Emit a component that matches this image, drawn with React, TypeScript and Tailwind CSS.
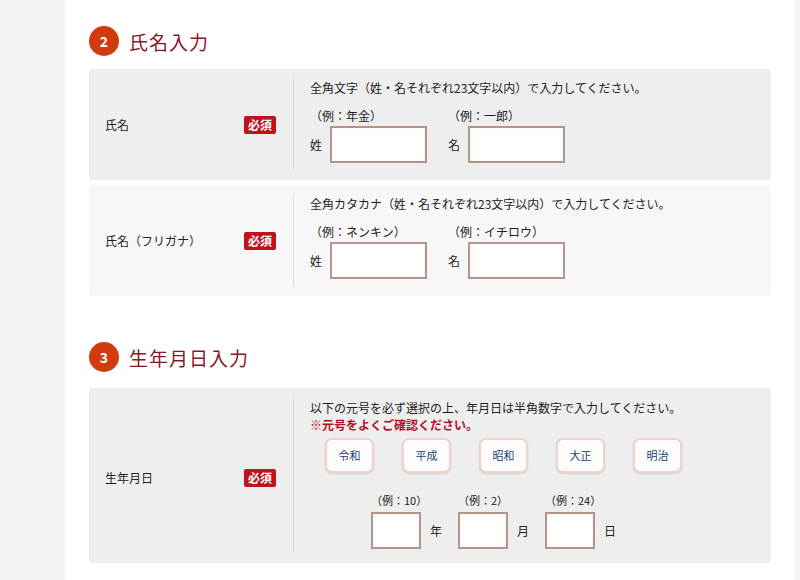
const font = { fontFamily: '"Noto Sans CJK JP", "Noto Sans", sans-serif' };

const Badge = () => (
  <span className="rounded-[2px] bg-[#c0121c] px-[4px] text-[12px] leading-[18px] font-bold text-white">必須</span>
);

const Heading = ({ num, title }: { num: string; title: string }) => (
  <div className="flex items-center gap-[10px]">
    <span className="flex h-[30px] w-[30px] items-center justify-center rounded-full bg-[#d23a0f] text-[14px] font-bold text-white">
      {num}
    </span>
    <h2 className="text-[19px] leading-none tracking-[1px] text-[#8a1628]">{title}</h2>
  </div>
);

const TextBox = ({ w }: { w: string }) => (
  <div className={`${w} h-[37px] border-2 border-[#b3958a] bg-white shadow-[inset_0_0_2px_rgba(0,0,0,0.1)]`} />
);

const NameRow = ({
  label,
  note,
  ex1,
  ex2,
  bg,
}: {
  label: string;
  note: string;
  ex1: string;
  ex2: string;
  bg: string;
}) => (
  <div className={`flex h-[111px] rounded-[3px] ${bg}`}>
    <div className="flex w-[205px] items-center justify-between border-r border-[#dcdcdc] pr-[17px] pl-[16px] my-[9px]">
      <span className="text-[12px] text-[#222]">{label}</span>
      <Badge />
    </div>
    <div className="pl-[16px] pt-[11px] text-[12px] text-[#222]">
      <p className="leading-[16px]">{note}</p>
      <div className="mt-[12px] flex gap-[21px]">
        <div>
          <p className="leading-[16px]">（例：{ex1}）</p>
          <div className="mt-[2px] flex items-center gap-[8px]">
            <span>姓</span>
            <TextBox w="w-[97px]" />
          </div>
        </div>
        <div>
          <p className="leading-[16px]">（例：{ex2}）</p>
          <div className="mt-[2px] flex items-center gap-[8px]">
            <span>名</span>
            <TextBox w="w-[97px]" />
          </div>
        </div>
      </div>
    </div>
  </div>
);

const eras = ['令和', '平成', '昭和', '大正', '明治'];

const dateParts = [
  { ex: '10', unit: '年' },
  { ex: '2', unit: '月' },
  { ex: '24', unit: '日' },
];

export default function App() {
  return (
    <div style={font} className="flex h-[580px] w-[800px] overflow-hidden bg-[#f4f4f4]">
      <div className="w-[65px] shrink-0" />
      <div className="w-[730px] shrink-0 bg-white px-[24px] pt-[26px]">
        <Heading num="2" title="氏名入力" />
        <div className="mt-[13px] flex flex-col gap-[5px]">
          <NameRow
            label="氏名"
            note="全角文字（姓・名それぞれ23文字以内）で入力してください。"
            ex1="年金"
            ex2="一郎"
            bg="bg-[#eeeeee]"
          />
          <NameRow
            label="氏名（フリガナ）"
            note="全角カタカナ（姓・名それぞれ23文字以内）で入力してください。"
            ex1="ネンキン"
            ex2="イチロウ"
            bg="bg-[#f7f7f7]"
          />
        </div>

        <div className="mt-[46px]">
          <Heading num="3" title="生年月日入力" />
        </div>
        <div className="mt-[16px] flex h-[175px] rounded-[3px] bg-[#eeeeee]">
          <div className="my-[10px] flex w-[205px] items-center justify-between border-r border-[#dcdcdc] pr-[17px] pl-[16px] pt-[4px]">
            <span className="text-[12px] text-[#222]">生年月日</span>
            <Badge />
          </div>
          <div className="pl-[16px] pt-[12px] text-[12px] text-[#222]">
            <p className="leading-[16px]">以下の元号を必ず選択の上、年月日は半角数字で入力してください。</p>
            <p className="leading-[18px] font-bold text-[#b0102a]">※元号をよくご確認ください。</p>
            <div className="mt-[4px] ml-[15px] flex gap-[28px]">
              {eras.map((e) => (
                <div
                  key={e}
                  className="flex h-[35px] w-[49px] items-center justify-center rounded-[7px] border-2 border-[#eed3c6] bg-[#fcfcfc] text-[11px] text-[#1d3f7a] shadow-[0_1px_2px_rgba(0,0,0,0.12)]"
                >
                  {e}
                </div>
              ))}
            </div>
            <div className="mt-[19px] ml-[61px] flex">
              {dateParts.map((d) => (
                <div key={d.unit} className="w-[87px] shrink-0">
                  <p className="leading-[16px] text-[11px] whitespace-nowrap">（例：{d.ex}）</p>
                  <div className="mt-[4px] flex items-center gap-[9px]">
                    <TextBox w="w-[50px]" />
                    <span>{d.unit}</span>
                  </div>
                </div>
              ))}
            </div>
          </div>
        </div>
      </div>
    </div>
  );
}
